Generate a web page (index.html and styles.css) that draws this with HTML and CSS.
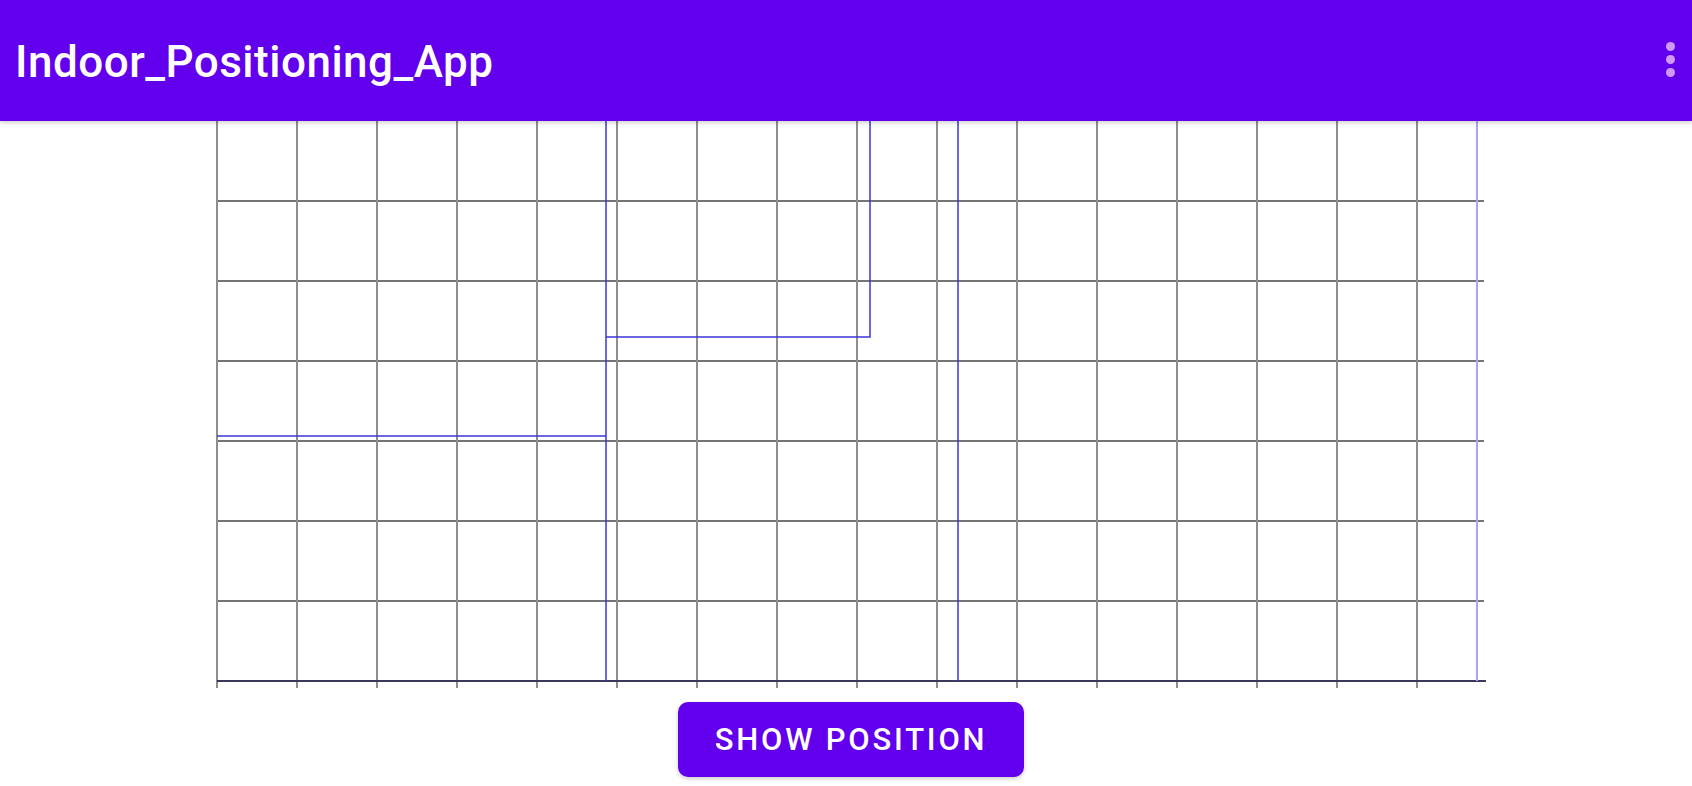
FILE: index.html
```html
<!DOCTYPE html>
<html>
<head>
<meta charset="utf-8">
<link rel="stylesheet" href="styles.css">
</head>
<body>
<header class="appbar">
  <h1 class="title">Indoor_Positioning_App</h1>
  <div class="menu" aria-label="More options">
    <span class="dot"></span><span class="dot"></span><span class="dot"></span>
  </div>
</header>
<main class="content">
  <svg class="chart" width="1692" height="572" viewBox="0 121 1692 572" xmlns="http://www.w3.org/2000/svg">
    <g class="hgrid" stroke="#474747" stroke-width="1.5">
      <line x1="217" y1="201" x2="1484" y2="201"/>
      <line x1="217" y1="281" x2="1484" y2="281"/>
      <line x1="217" y1="361" x2="1484" y2="361"/>
      <line x1="217" y1="441" x2="1484" y2="441"/>
      <line x1="217" y1="521" x2="1484" y2="521"/>
      <line x1="217" y1="601" x2="1484" y2="601"/>
    </g>
    <g class="vgrid" stroke="#8e8e8e" stroke-width="2">
      <line x1="217" y1="121" x2="217" y2="688"/>
      <line x1="297" y1="121" x2="297" y2="688"/>
      <line x1="377" y1="121" x2="377" y2="688"/>
      <line x1="457" y1="121" x2="457" y2="688"/>
      <line x1="537" y1="121" x2="537" y2="688"/>
      <line x1="617" y1="121" x2="617" y2="688"/>
      <line x1="697" y1="121" x2="697" y2="688"/>
      <line x1="777" y1="121" x2="777" y2="688"/>
      <line x1="857" y1="121" x2="857" y2="688"/>
      <line x1="937" y1="121" x2="937" y2="688"/>
      <line x1="1017" y1="121" x2="1017" y2="688"/>
      <line x1="1097" y1="121" x2="1097" y2="688"/>
      <line x1="1177" y1="121" x2="1177" y2="688"/>
      <line x1="1257" y1="121" x2="1257" y2="688"/>
      <line x1="1337" y1="121" x2="1337" y2="688"/>
      <line x1="1417" y1="121" x2="1417" y2="688"/>
    </g>
    <line x1="217" y1="681" x2="1486" y2="681" stroke="#3c3a5c" stroke-width="2"/>
    <g fill="none" stroke="#3d35d6" stroke-width="1.5">
      <polyline points="217,436 606,436"/>
      <line x1="606" y1="121" x2="606" y2="681"/>
      <polyline points="606,337 870,337 870,121"/>
      <line x1="958" y1="121" x2="958" y2="681"/>
    </g>
    <line x1="1477" y1="121" x2="1477" y2="681" stroke="#a9a6ee" stroke-width="2"/>
  </svg>
  <div class="actions">
    <button class="btn">SHOW POSITION</button>
  </div>
</main>
</body>
</html>
```
FILE: styles.css
```css
html, body {
  margin: 0;
  padding: 0;
  background: #ffffff;
  font-family: Roboto, "Noto Sans", "Liberation Sans", sans-serif;
}
body {
  width: 1692px;
  height: 786px;
  overflow: hidden;
}
.appbar {
  height: 121px;
  background: #6200ee;
  display: flex;
  align-items: center;
  justify-content: space-between;
  padding: 0 0 0 15px;
  box-sizing: border-box;
  box-shadow: 0 2px 4px rgba(0,0,0,0.18);
  position: relative;
  z-index: 1;
}
.title {
  margin: 0;
  color: #ffffff;
  font-weight: 500;
  font-size: 44px;
  letter-spacing: 0.5px;
  line-height: 1;
  padding-top: 3px;
}
.menu {
  width: 54px;
  display: flex;
  flex-direction: column;
  align-items: flex-start;
  gap: 4px;
  padding-bottom: 3px;
}
.dot {
  width: 9px;
  height: 9px;
  border-radius: 50%;
  background: #cf9bf6;
  margin-left: 28px;
}
.content {
  display: flex;
  flex-direction: column;
}
.chart {
  display: block;
}
.actions {
  display: flex;
  padding-left: 678px;
  margin-top: 9px;
}
.btn {
  width: 346px;
  height: 75px;
  border: none;
  border-radius: 10px;
  background: #6200ee;
  color: #ffffff;
  font-family: Roboto, "Noto Sans", sans-serif;
  font-weight: 500;
  font-size: 31px;
  letter-spacing: 0.09em;
  box-shadow: 0 2px 4px rgba(0,0,0,0.2);
  padding: 0;
}
```
